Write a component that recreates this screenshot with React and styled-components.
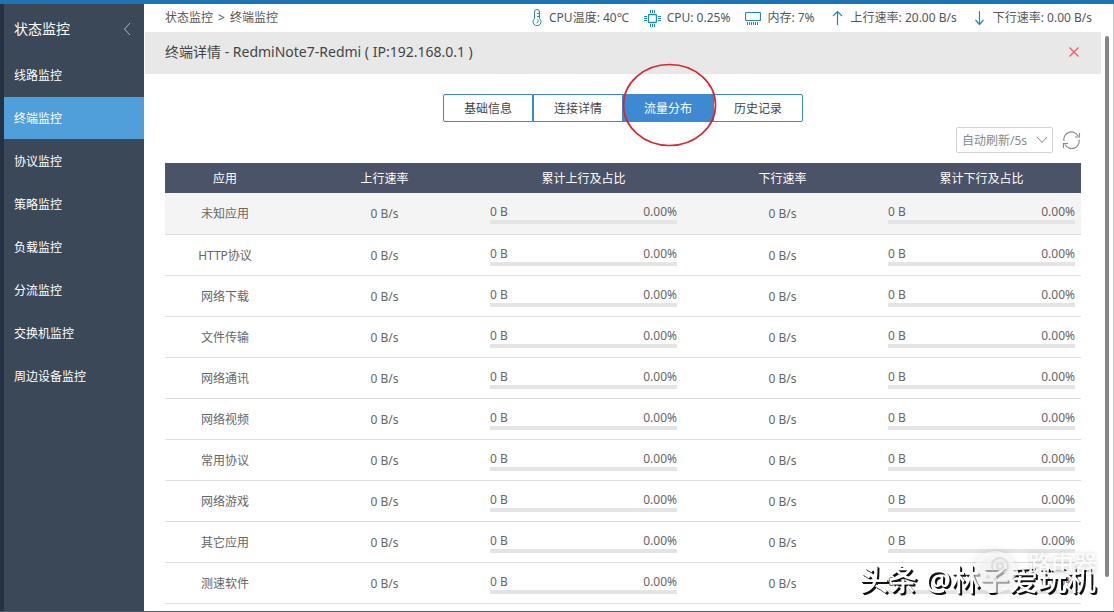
import { useState } from "react";
import styled, { createGlobalStyle } from "styled-components";

const GlobalStyle = createGlobalStyle`
  * {
    box-sizing: border-box;
  }
  body {
    margin: 0;
    background: #fff;
    color: #555;
    font: 12px/16px "Noto Sans", "Noto Sans CJK SC", sans-serif;
  }
  button, select {
    font: inherit;
    color: inherit;
  }
  a {
    color: inherit;
    text-decoration: none;
  }
`;

const Page = styled.div`
  display: flex;
  flex-direction: column;
  min-height: 100vh;
  border-top: 4px solid #1c74b4;
  border-bottom: 1px solid #55585c;
`;
const Body = styled.div`
  display: flex;
  flex: 1;
  border-right: 1px solid #c9c9c9;
`;

const Sidebar = styled.nav`
  flex: 0 0 144px;
  background: #3a4857;
  border-left: 4px solid #243244;
  color: #fff;
`;
const SideTitle = styled.div`
  display: flex;
  align-items: center;
  justify-content: space-between;
  height: 50px;
  padding: 0 12px 0 10px;
  font-size: 14px;
`;
const CollapseButton = styled.button`
  display: flex;
  padding: 0;
  border: 0;
  background: none;
  cursor: pointer;
`;
const SideLink = styled.a`
  display: flex;
  align-items: center;
  height: 42px;
  margin-bottom: 1px;
  padding: 2px 0 0 10px;
  background: ${(props) => (props.$active ? "#509fdb" : "none")};
`;

const Main = styled.main`
  display: flex;
  flex-direction: column;
  flex: 1;
  min-width: 0;
`;
const TopBar = styled.header`
  display: flex;
  align-items: center;
  justify-content: space-between;
  height: 28px;
  padding: 0 21px;
`;
const Crumbs = styled.div`
  display: flex;
  gap: 5px;
`;
const Stats = styled.div`
  display: flex;
  gap: 15px;
`;
const Stat = styled.span`
  display: flex;
  align-items: center;
  gap: 6px;
  white-space: nowrap;
`;

const Scroller = styled.div`
  display: flex;
  flex: 1;
  padding-left: 1px;
`;
const Panel = styled.section`
  flex: 1;
  min-width: 0;
`;
const ScrollTrack = styled.div`
  display: flex;
  justify-content: center;
  width: 12px;
  padding: 4px 0 34px;
`;
const ScrollThumb = styled.div`
  width: 4px;
  border-radius: 2px;
  background: #858585;
`;
const PanelHeader = styled.div`
  display: flex;
  align-items: center;
  justify-content: space-between;
  height: 42px;
  padding: 0 21px 2px 20px;
  background: #e8e8e8;
  color: #444;
`;
const PanelTitle = styled.h1`
  margin: 0;
  font-size: 14px;
  font-weight: 400;
`;
const CloseButton = styled.button`
  display: flex;
  padding: 0;
  border: 0;
  background: none;
  cursor: pointer;
`;
const PanelBody = styled.div`
  padding: 20px 20px 7px;
`;

const Tabs = styled.div`
  display: flex;
  justify-content: center;
`;
const Tab = styled.button`
  position: relative;
  width: 90px;
  height: 28px;
  padding: 2px 0 0;
  border: 1px solid #3f87cc;
  background: ${(props) => (props.$active ? "#3d8ad2" : "#fff")};
  color: ${(props) => (props.$active ? "#fff" : "#444")};
  cursor: pointer;
  &:first-child {
    border-radius: 2px 0 0 2px;
  }
  &:last-child {
    border-radius: 0 2px 2px 0;
  }
`;
const Marker = styled.svg`
  position: absolute;
  z-index: 1;
  top: -32px;
  left: -2px;
  pointer-events: none;
`;

const Tools = styled.div`
  display: flex;
  align-items: center;
  justify-content: flex-end;
  gap: 9px;
  margin: 5px 0 10px;
`;
const SelectBox = styled.label`
  display: flex;
  align-items: center;
  width: 97px;
  height: 26px;
  padding: 0 4px 0 5px;
  border: 1px solid #d3d3d3;
  border-radius: 2px;
  color: #888;
`;
const Select = styled.select`
  flex: 1;
  min-width: 0;
  padding: 2px 0 0;
  border: 0;
  outline: 0;
  background: none;
  appearance: none;
`;
const RefreshButton = styled(CloseButton)``;

const Table = styled.table`
  width: 100%;
  table-layout: fixed;
  border-collapse: collapse;
  text-align: center;
  color: #666;
`;
const Th = styled.th`
  width: ${(props) => props.$width || "auto"};
  height: 30px;
  padding: 2px 0 0;
  background: #4b5368;
  color: #fff;
  font-weight: 400;
`;
const Row = styled.tr`
  background: ${(props) => (props.$hover ? "#f4f4f4" : "#fff")};
  border-bottom: 1px solid #ddd;
`;
const Td = styled.td`
  height: 41px;
  padding: 2px 0 0;
`;
const UsageCell = styled(Td)`
  padding: 2px 6px 0;
`;
const UsageText = styled.div`
  display: flex;
  justify-content: space-between;
`;
const Track = styled.div`
  height: 4px;
  background: #e4e4e4;
`;
const Fill = styled.div`
  height: 100%;
  background: #3d8ad2;
`;

const Watermark = styled.div`
  position: fixed;
  right: 18px;
  bottom: 14px;
  color: #fff;
  font: 500 29px/36px "Noto Sans", "Noto Sans CJK SC", sans-serif;
  text-shadow: 1px 1px 0 #111, 2px 2px 0 #111;
  white-space: nowrap;
  pointer-events: none;
`;
const SiteMark = styled.div`
  position: fixed;
  right: 17px;
  bottom: 18px;
  display: flex;
  gap: 11px;
  color: rgba(255, 255, 255, 0.85);
  font: 500 23px/24px "Noto Sans CJK SC", sans-serif;
  text-shadow: 0 0 4px rgba(0, 0, 0, 0.2);
  pointer-events: none;
`;
const SiteLogo = styled.svg`
  filter: drop-shadow(0 0 4px rgba(0, 0, 0, 0.2));
`;

const menu = [
  "线路监控",
  "终端监控",
  "协议监控",
  "策略监控",
  "负载监控",
  "分流监控",
  "交换机监控",
  "周边设备监控",
];
const tabs = ["基础信息", "连接详情", "流量分布", "历史记录"];
const apps = [
  "未知应用",
  "HTTP协议",
  "网络下载",
  "文件传输",
  "网络通讯",
  "网络视频",
  "常用协议",
  "网络游戏",
  "其它应用",
  "测速软件",
].map((name) => ({ name, up: 0, down: 0, upTotal: 0, downTotal: 0 }));

const ThermoIcon = () => (
  <svg width="12" height="18" viewBox="0 0 12 18" fill="none" stroke="#2288b8">
    <path d="M3.5 9.500V3a2.500 2.500 0 0 1 5 0v6.500a4 4 0 1 1-5 0Z" />
    <path d="M8 4.500H6M8 7.500H6" />
    <path d="M6.500 10.500a2 2 0 0 1-1 3.500" />
  </svg>
);

const CpuIcon = () => (
  <svg width="17" height="18" viewBox="0 0 17 18" fill="none" stroke="#2288b8">
    <rect x="4.5" y="5.5" width="8" height="8" rx="1" strokeWidth="1.3" />
    <path d="M6.500 1v3M8.500 1v3M10.500 1v3M6.500 15v3M8.500 15v3M10.500 15v3" />
    <path d="M0 7.500h3M0 9.500h3M0 11.500h3M14 7.500h3M14 9.500h3M14 11.500h3" />
  </svg>
);

const MemoryIcon = () => (
  <svg width="16" height="16" viewBox="0 0 16 16" fill="none" stroke="#2288b8">
    <rect x="0.5" y="2.5" width="15" height="8" rx="1" strokeWidth="1.2" />
    <path d="M2.500 12v3M4.500 12v3M6.500 12v3M8.500 12v3M10.500 12v3M12.500 12v3" />
  </svg>
);

const ArrowIcon = ({ down }) => (
  <svg width="15" height="16" viewBox="-2 0 15 16" fill="none" stroke="#2288b8" strokeWidth="1.2">
    <path d={down ? "M5.5 1v13.500M1.500 10l4 4.500 4-4.500" : "M5.5 15V1.500M1 6l4.500-4.500L10 6"} />
  </svg>
);

const Usage = ({ bytes, percent }) => (
  <UsageCell>
    <UsageText>
      <span>{bytes} B</span>
      <span>{percent.toFixed(2)}%</span>
    </UsageText>
    <Track>
      <Fill style={{ width: `${percent}%` }} />
    </Track>
  </UsageCell>
);

const App = () => {
  const [tab, setTab] = useState(2);

  return (
    <Page>
      <GlobalStyle />
      <Body>
        <Sidebar>
          <SideTitle>
            状态监控
            <CollapseButton aria-label="收起">
              <svg width="10" height="14" viewBox="0 0 10 14" fill="none" stroke="#aeb6be">
                <path d="M8 1 2.500 7 8 13" />
              </svg>
            </CollapseButton>
          </SideTitle>
          {menu.map((item) => (
            <SideLink key={item} href="#" $active={item === "终端监控"}>
              {item}
            </SideLink>
          ))}
        </Sidebar>

        <Main>
          <TopBar>
            <Crumbs>
              <a href="#">状态监控</a>
              <span>&gt;</span>
              <a href="#">终端监控</a>
            </Crumbs>
            <Stats>
              <Stat><ThermoIcon />CPU温度: 40℃</Stat>
              <Stat><CpuIcon />CPU: 0.25%</Stat>
              <Stat><MemoryIcon />内存: 7%</Stat>
              <Stat><ArrowIcon />上行速率: 20.00 B/s</Stat>
              <Stat><ArrowIcon down />下行速率: 0.00 B/s</Stat>
            </Stats>
          </TopBar>

          <Scroller>
            <Panel>
              <PanelHeader>
                <PanelTitle>终端详情 - RedmiNote7-Redmi ( IP:192.168.0.1 )</PanelTitle>
                <CloseButton aria-label="关闭">
                  <svg width="12" height="12" viewBox="0 0 12 12" stroke="#f0606c" strokeWidth="1.4">
                    <path d="m1.500 1.500 9 9M10.500 1.500l-9 9" />
                  </svg>
                </CloseButton>
              </PanelHeader>

              <PanelBody>
                <Tabs>
                  {tabs.map((name, i) => (
                    <Tab key={name} $active={i === tab} onClick={() => setTab(i)}>
                      {name}
                      {i === 2 && (
                        <Marker width="95" height="84" viewBox="0 0 95 84">
                          <ellipse cx="47.500" cy="42" rx="46" ry="40.500" fill="none" stroke="#d9262e" strokeWidth="1.7" />
                        </Marker>
                      )}
                    </Tab>
                  ))}
                </Tabs>

                <Tools>
                  <SelectBox>
                    <Select aria-label="自动刷新" defaultValue="5">
                      <option value="5">自动刷新/5s</option>
                      <option value="10">自动刷新/10s</option>
                    </Select>
                    <svg width="12" height="8" viewBox="0 0 12 8" fill="none" stroke="#888">
                      <path d="m1 1 5 5.500L11 1" />
                    </svg>
                  </SelectBox>
                  <RefreshButton aria-label="刷新">
                    <svg width="19" height="18" viewBox="0 0 19 18" fill="none" stroke="#888" strokeWidth="1.1">
                      <path d="M2 10a7.500 7.500 0 0 1 14-5M17 8.500a7.500 7.500 0 0 1-14 5" />
                      <path d="M17.500 2v4h-4.500M1.500 17v-4.500h4.500" />
                    </svg>
                  </RefreshButton>
                </Tools>

                <Table>
                  <thead>
                    <tr>
                      <Th $width="120px">应用</Th>
                      <Th>上行速率</Th>
                      <Th>累计上行及占比</Th>
                      <Th>下行速率</Th>
                      <Th>累计下行及占比</Th>
                    </tr>
                  </thead>
                  <tbody>
                    {apps.map((app, i) => (
                      <Row key={app.name} $hover={i === 0}>
                        <Td>{app.name}</Td>
                        <Td>{app.up} B/s</Td>
                        <Usage bytes={app.upTotal} percent={0} />
                        <Td>{app.down} B/s</Td>
                        <Usage bytes={app.downTotal} percent={0} />
                      </Row>
                    ))}
                  </tbody>
                </Table>
              </PanelBody>
            </Panel>
            <ScrollTrack>
              <ScrollThumb />
            </ScrollTrack>
          </Scroller>
        </Main>
      </Body>

      <Watermark>头条 @林子爱玩机</Watermark>
      <SiteMark>
        <SiteLogo width="44" height="44" viewBox="0 0 44 44">
          <circle cx="22" cy="22" r="21" fill="#fff" fillOpacity="0.6" />
          <g fill="none" stroke="#ddd" strokeWidth="2">
            <circle cx="27" cy="16" r="3" />
            <path d="M20 20a8 8 0 1 1 11 3" />
          </g>
          <circle cx="15" cy="27" r="2" fill="#ddd" />
          <circle cx="22" cy="29" r="2" fill="#ddd" />
        </SiteLogo>
        路由器
      </SiteMark>
    </Page>
  );
};

export default App;
